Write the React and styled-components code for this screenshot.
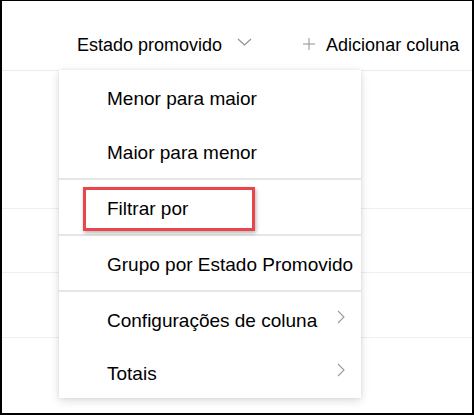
import React from "react";
import styled, { createGlobalStyle } from "styled-components";

const Global = createGlobalStyle`
  html, body { margin: 0; padding: 0; background: #fff; }
  body { font-family: "Liberation Sans", Arial, sans-serif; }
`;

const Frame = styled.div`
  position: relative;
  box-sizing: border-box;
  width: 474px;
  height: 415px;
  border-style: solid;
  border-color: #000;
  border-width: 1px 2px 2px 2px;
  background: #fff;
  overflow: hidden;
`;

const Header = styled.div`
  display: flex;
  align-items: flex-start;
  box-sizing: border-box;
  height: 70px;
  padding: 32px 0 0 75px;
  border-bottom: 1px solid #ececec;
  font-size: 18px;
  line-height: 24px;
  color: #000;
`;

const HeaderText = styled.span`
  white-space: nowrap;
  margin-left: ${(p) => p.$gap || 0}px;
`;

const HeaderIcon = styled.span`
  display: inline-flex;
  margin-left: ${(p) => p.$gap}px;
  margin-top: ${(p) => p.$top}px;
  color: #8f8f8f;
`;

const Row = styled.div`
  height: ${(p) => p.$h}px;
  border-bottom: 1px solid #efefef;
`;

const Menu = styled.div`
  position: absolute;
  left: 57px;
  top: 69px;
  width: 302px;
  background: #fff;
  box-shadow: 0 3px 9px rgba(0, 0, 0, 0.13), 0 0 4px rgba(0, 0, 0, 0.08);
  font-size: 19px;
  color: #000;
`;

const Section = styled.div`
  & + & {
    border-top: 2px solid #e6e6e6;
  }
`;

const Item = styled.div`
  position: relative;
  display: flex;
  align-items: center;
  justify-content: space-between;
  box-sizing: border-box;
  height: ${(p) => p.$h}px;
  padding: 4px 16px 0 48px;
  white-space: nowrap;
`;

const Highlight = styled.div`
  position: absolute;
  left: 24px;
  top: 7px;
  width: 172px;
  height: 44px;
  box-sizing: border-box;
  border: 3px solid #e8464c;
  box-shadow: 1px 2px 4px rgba(0, 0, 0, 0.3);
`;

const Chevron = styled.svg`
  flex: none;
  margin-top: -8px;
`;

const ChevronRight = () => (
  <Chevron width="8" height="14" viewBox="0 0 8 14">
    <path d="M1 1 L7 7 L1 13" fill="none" stroke="#9a9a9a" strokeWidth="1.1" />
  </Chevron>
);

const items = [
  ["Menor para maior", "Maior para menor"],
  ["Filtrar por"],
  ["Grupo por Estado Promovido"],
  ["Configurações de coluna", "Totais"],
];

export default function App() {
  return (
    <>
      <Global />
      <Frame>
        <Header>
          <HeaderText>Estado promovido</HeaderText>
          <HeaderIcon $gap={15} $top={5}>
            <svg width="15" height="8" viewBox="0 0 15 8">
              <path d="M1 1 L7.5 7 L14 1" fill="none" stroke="currentColor" strokeWidth="1.1" />
            </svg>
          </HeaderIcon>
          <HeaderIcon $gap={51} $top={5}>
            <svg width="12" height="12" viewBox="0 0 12 12">
              <path d="M6 0 V12 M0 6 H12" fill="none" stroke="currentColor" strokeWidth="1" />
            </svg>
          </HeaderIcon>
          <HeaderText $gap={11}>Adicionar coluna</HeaderText>
        </Header>
        <Row $h={137} />
        <Row $h={63} />
        <Row $h={64} />
        <Menu>
          {items.map((sec, si) => (
            <Section key={si}>
              {sec.map((label, ii) => (
                <Item key={label} $h={si === 3 && ii === 1 ? 52 : 54}>
                  <span>{label}</span>
                  {si === 3 && <ChevronRight />}
                  {label === "Filtrar por" && <Highlight />}
                </Item>
              ))}
            </Section>
          ))}
        </Menu>
      </Frame>
    </>
  );
}
